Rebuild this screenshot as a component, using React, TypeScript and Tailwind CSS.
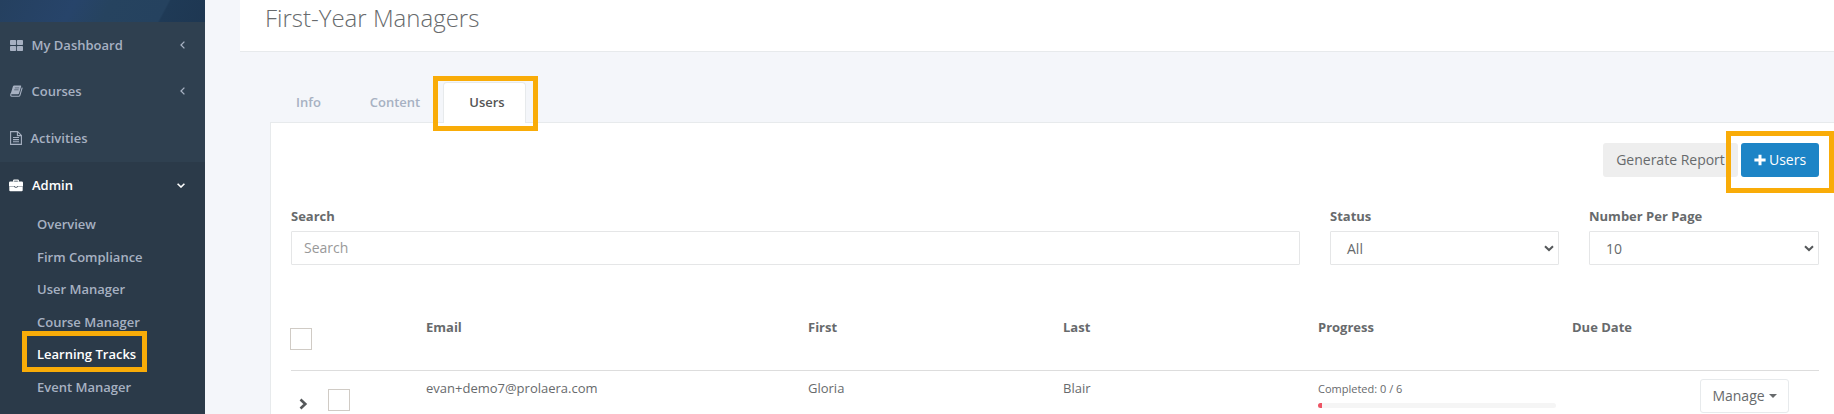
import clsx from "clsx";

const SUB_ITEMS = [
  "Overview",
  "Firm Compliance",
  "User Manager",
  "Course Manager",
  "Learning Tracks",
  "Event Manager",
];

const COLUMNS = ["Email", "First", "Last", "Progress", "Due Date"];

const TABLE_GRID = "grid grid-cols-[127px_382px_255px_255px_254px_255px]";

function GridIcon() {
  return (
    <svg viewBox="0 0 13 11" className="h-[11px] w-[13px]" fill="currentColor">
      <rect x="0" y="0" width="6.1" height="5.1" rx="0.8" />
      <rect x="6.9" y="0" width="6.1" height="5.1" rx="0.8" />
      <rect x="0" y="5.9" width="6.1" height="5.1" rx="0.8" />
      <rect x="6.9" y="5.9" width="6.1" height="5.1" rx="0.8" />
    </svg>
  );
}

function BookIcon() {
  return (
    <svg viewBox="0 0 13 12" className="h-3 w-[13px]">
      <path d="M4.2 0.4H10.6Q11.4 0.4 11.2 1.2L9 8.6Q8.8 9.3 8 9.3H1.4Q0.6 9.3 0.8 8.5L2.9 1.4Q3.2 0.4 4.2 0.4Z" fill="currentColor" />
      <path d="M1.1 8.4Q0.1 11.2 1.8 11.2H8.6Q9.6 11.2 9.9 10.3L12.2 2.7" fill="none" stroke="currentColor" strokeWidth="1.1" />
      <path d="M4.8 2.9H9.2M4.2 4.8H8.6" stroke="#2f4050" strokeWidth="0.6" />
    </svg>
  );
}

function FileIcon() {
  return (
    <svg viewBox="0 0 12 14" className="h-[14px] w-3" fill="none" stroke="currentColor" strokeWidth="1.1">
      <path d="M0.6 0.6H7.6L11.4 4.4V13.4H0.6Z" />
      <path d="M7.4 0.8V4.6H11.2M3 6.5H9M3 8.6H9M3 10.7H9" />
    </svg>
  );
}

function BriefcaseIcon() {
  return (
    <svg viewBox="0 0 14 13" className="h-[13px] w-[14px]">
      <path d="M4.6 2.8V1.8Q4.6 1.2 5.2 1.2H8.8Q9.4 1.2 9.4 1.8V2.8" fill="none" stroke="currentColor" strokeWidth="1.2" />
      <path d="M1.3 2.5H12.7Q14 2.5 14 3.8V7.4H8.6V6.9H5.4V7.4H0V3.8Q0 2.5 1.3 2.5Z" fill="currentColor" />
      <path d="M0.3 7.7H5.2Q5.6 8.8 7 8.8Q8.4 8.8 8.8 7.7H13.7V11.2Q13.7 12.3 12.6 12.3H1.4Q0.3 12.3 0.3 11.2Z" fill="currentColor" />
      <rect x="6" y="7.2" width="2" height="0.9" fill="currentColor" />
    </svg>
  );
}

function AngleLeft() {
  return (
    <svg viewBox="0 0 5 8" className="ml-auto h-2 w-[5px]" fill="none" stroke="currentColor" strokeWidth="1.3">
      <path d="M4.4 0.6L1 4L4.4 7.4" />
    </svg>
  );
}

function AngleDown() {
  return (
    <svg viewBox="0 0 8 5" className="ml-auto h-[5px] w-2" fill="none" stroke="currentColor" strokeWidth="1.6">
      <path d="M0.6 0.7L4 4L7.4 0.7" />
    </svg>
  );
}

// open chevron used by the native looking selects
function SelectArrow() {
  return (
    <svg viewBox="0 0 10 7" className="h-[7px] w-[10px]" fill="none" stroke="#55585a" strokeWidth="2">
      <path d="M1 1.2L5 5L9 1.2" />
    </svg>
  );
}

function Checkbox() {
  return <span className="block size-[22px] border border-[#d0cbc5] bg-white" />;
}

function Highlight({ className }: { className: string }) {
  return <div className={clsx("pointer-events-none absolute z-10 border-5 border-[#f9ac08]", className)} />;
}

function Sidebar() {
  return (
    <nav className="flex w-[205px] shrink-0 flex-col bg-[#2f4050] text-[13px] font-semibold text-[#a7b1c2]">
      <div className="h-[22px] shrink-0 bg-[linear-gradient(118deg,#25405f_0%,#27446a_35%,#26435f_52%,#25425f_78%,#1f3a56_79%,#1e3752_100%)]" />
      <div className="flex h-[46px] items-center pr-5 pl-[10px]">
        <GridIcon />
        <span className="ml-[8.5px]">My Dashboard</span>
        <AngleLeft />
      </div>
      <div className="flex h-[46px] items-center pr-5 pl-[10px]">
        <BookIcon />
        <span className="ml-[8.5px]">Courses</span>
        <AngleLeft />
      </div>
      <div className="flex h-12 items-center pb-px pl-[10px]">
        <FileIcon />
        <span className="ml-[8.5px]">Activities</span>
      </div>
      <div className="flex-1 bg-[#2b3a49]">
        <div className="flex h-[46px] items-center pr-5 pl-[9px] text-white">
          <BriefcaseIcon />
          <span className="ml-[9px]">Admin</span>
          <AngleDown />
        </div>
        <ul>
          {SUB_ITEMS.map((item) => (
            <li
              key={item}
              className={clsx("flex h-[32.5px] items-center pl-[37px]", item === "Learning Tracks" && "text-white")}
            >
              {item}
            </li>
          ))}
        </ul>
      </div>
    </nav>
  );
}

function SelectField({ label, value, className }: { label: string; value: string; className: string }) {
  return (
    <div className={className}>
      <label className="block h-[25px] leading-[20px] font-bold">{label}</label>
      <div className="flex h-[34px] items-center justify-between rounded-[1px] border border-[#e5e6e7] pr-1 pl-4 text-[14px]">
        <span className="pt-px">{value}</span>
        <SelectArrow />
      </div>
    </div>
  );
}

export default function App() {
  return (
    <div className="relative flex h-[414px] w-[1834px] overflow-hidden bg-[#f4f6fa] font-['Open_Sans',sans-serif] text-[13px] leading-[18px] text-[#676a6c]">
      <Sidebar />
      <main className="flex flex-1 flex-col">
        <header className="ml-[35px] h-[52px] border-b border-[#e7eaec] bg-white pl-[25px]">
          <h1 className="pt-px text-[24px] leading-[33px] font-light">First-Year Managers</h1>
        </header>

        <div className="ml-[65px] flex h-[70px] items-end font-semibold text-[#a7b1c2]">
          <div className="flex h-10 w-[77px] items-center justify-center">Info</div>
          <div className="flex h-10 w-[96px] items-center justify-center">Content</div>
          <div className="z-1 -mb-px flex h-[41px] w-[83px] items-center justify-center rounded-t-[4px] border border-b-0 border-[#e7eaec] bg-white pb-[2px] pl-[5px] text-[#555]">
            Users
          </div>
        </div>

        <section className="ml-[65px] flex-1 border-t border-l border-[#e7eaec] bg-white pl-5">
          <div className="flex justify-end gap-[3px] pt-5 pr-[15px] text-[14px]">
            <button className="h-[34px] w-[135px] rounded-[3px] bg-[#eee]">Generate Report</button>
            <button className="flex h-[34px] w-[78px] items-center justify-center gap-[3px] rounded-[3px] bg-[#1c84c6] text-white">
              <svg viewBox="0 0 12 12" className="size-3" fill="currentColor">
                <path d="M4.5 0.8H7.5V4.5H11.6V7.5H7.5V11.2H4.5V7.5H0.4V4.5H4.5Z" />
              </svg>
              Users
            </button>
          </div>

          <div className="mt-[29px] flex gap-[30px]">
            <div className="w-[1009px]">
              <label className="block h-[25px] leading-[20px] font-bold">Search</label>
              <div className="flex h-[34px] items-center rounded-[1px] border border-[#e5e6e7] pb-px pl-3 text-[14px] text-[#999]">
                Search
              </div>
            </div>
            <SelectField label="Status" value="All" className="w-[229px]" />
            <SelectField label="Number Per Page" value="10" className="w-[230px]" />
          </div>

          <div className={clsx(TABLE_GRID, "mt-[53px] h-[53px] w-[1528px] border-b border-[#ddd] font-bold")}>
            <div className="-ml-px pt-[10px]">
              <Checkbox />
            </div>
            {COLUMNS.map((col) => (
              <div key={col} className="pl-2">
                {col}
              </div>
            ))}
          </div>

          <div className={clsx(TABLE_GRID, "w-[1528px] pt-2")}>
            <div className="flex pt-[10px] pl-2">
              <svg viewBox="0 0 9 12" className="mt-[9px] h-3 w-[9px]" fill="none" stroke="#55585a" strokeWidth="2.6">
                <path d="M1.5 1.5L6.3 6L1.5 10.5" />
              </svg>
              <span className="ml-5">
                <Checkbox />
              </span>
            </div>
            <div className="pl-2">evan+demo7@prolaera.com</div>
            <div className="pl-2">Gloria</div>
            <div className="pl-2">Blair</div>
            <div className="pt-px pl-2">
              <div className="text-[11px]">Completed: 0 / 6</div>
              <div className="mt-[5px] h-[5px] w-[238px] overflow-hidden rounded-[3px] bg-[#f5f5f5]">
                <div className="h-full w-1 bg-[#ed5565]" />
              </div>
            </div>
            <div className="pl-[136px]">
              <button className="flex h-[34px] w-[89px] items-center justify-center gap-1 rounded-[3px] border border-[#e7eaec] bg-white text-[14px]">
                Manage
                <svg viewBox="0 0 8 4" className="h-1 w-2" fill="currentColor">
                  <path d="M0 0H8L4 4Z" />
                </svg>
              </button>
            </div>
          </div>
        </section>
      </main>

      <Highlight className="top-[76px] left-[433px] h-[55px] w-[105px]" />
      <Highlight className="top-[131px] left-[1726px] h-[62px] w-[108px]" />
      <Highlight className="top-[331px] left-[22px] h-[41px] w-[125px]" />
    </div>
  );
}
